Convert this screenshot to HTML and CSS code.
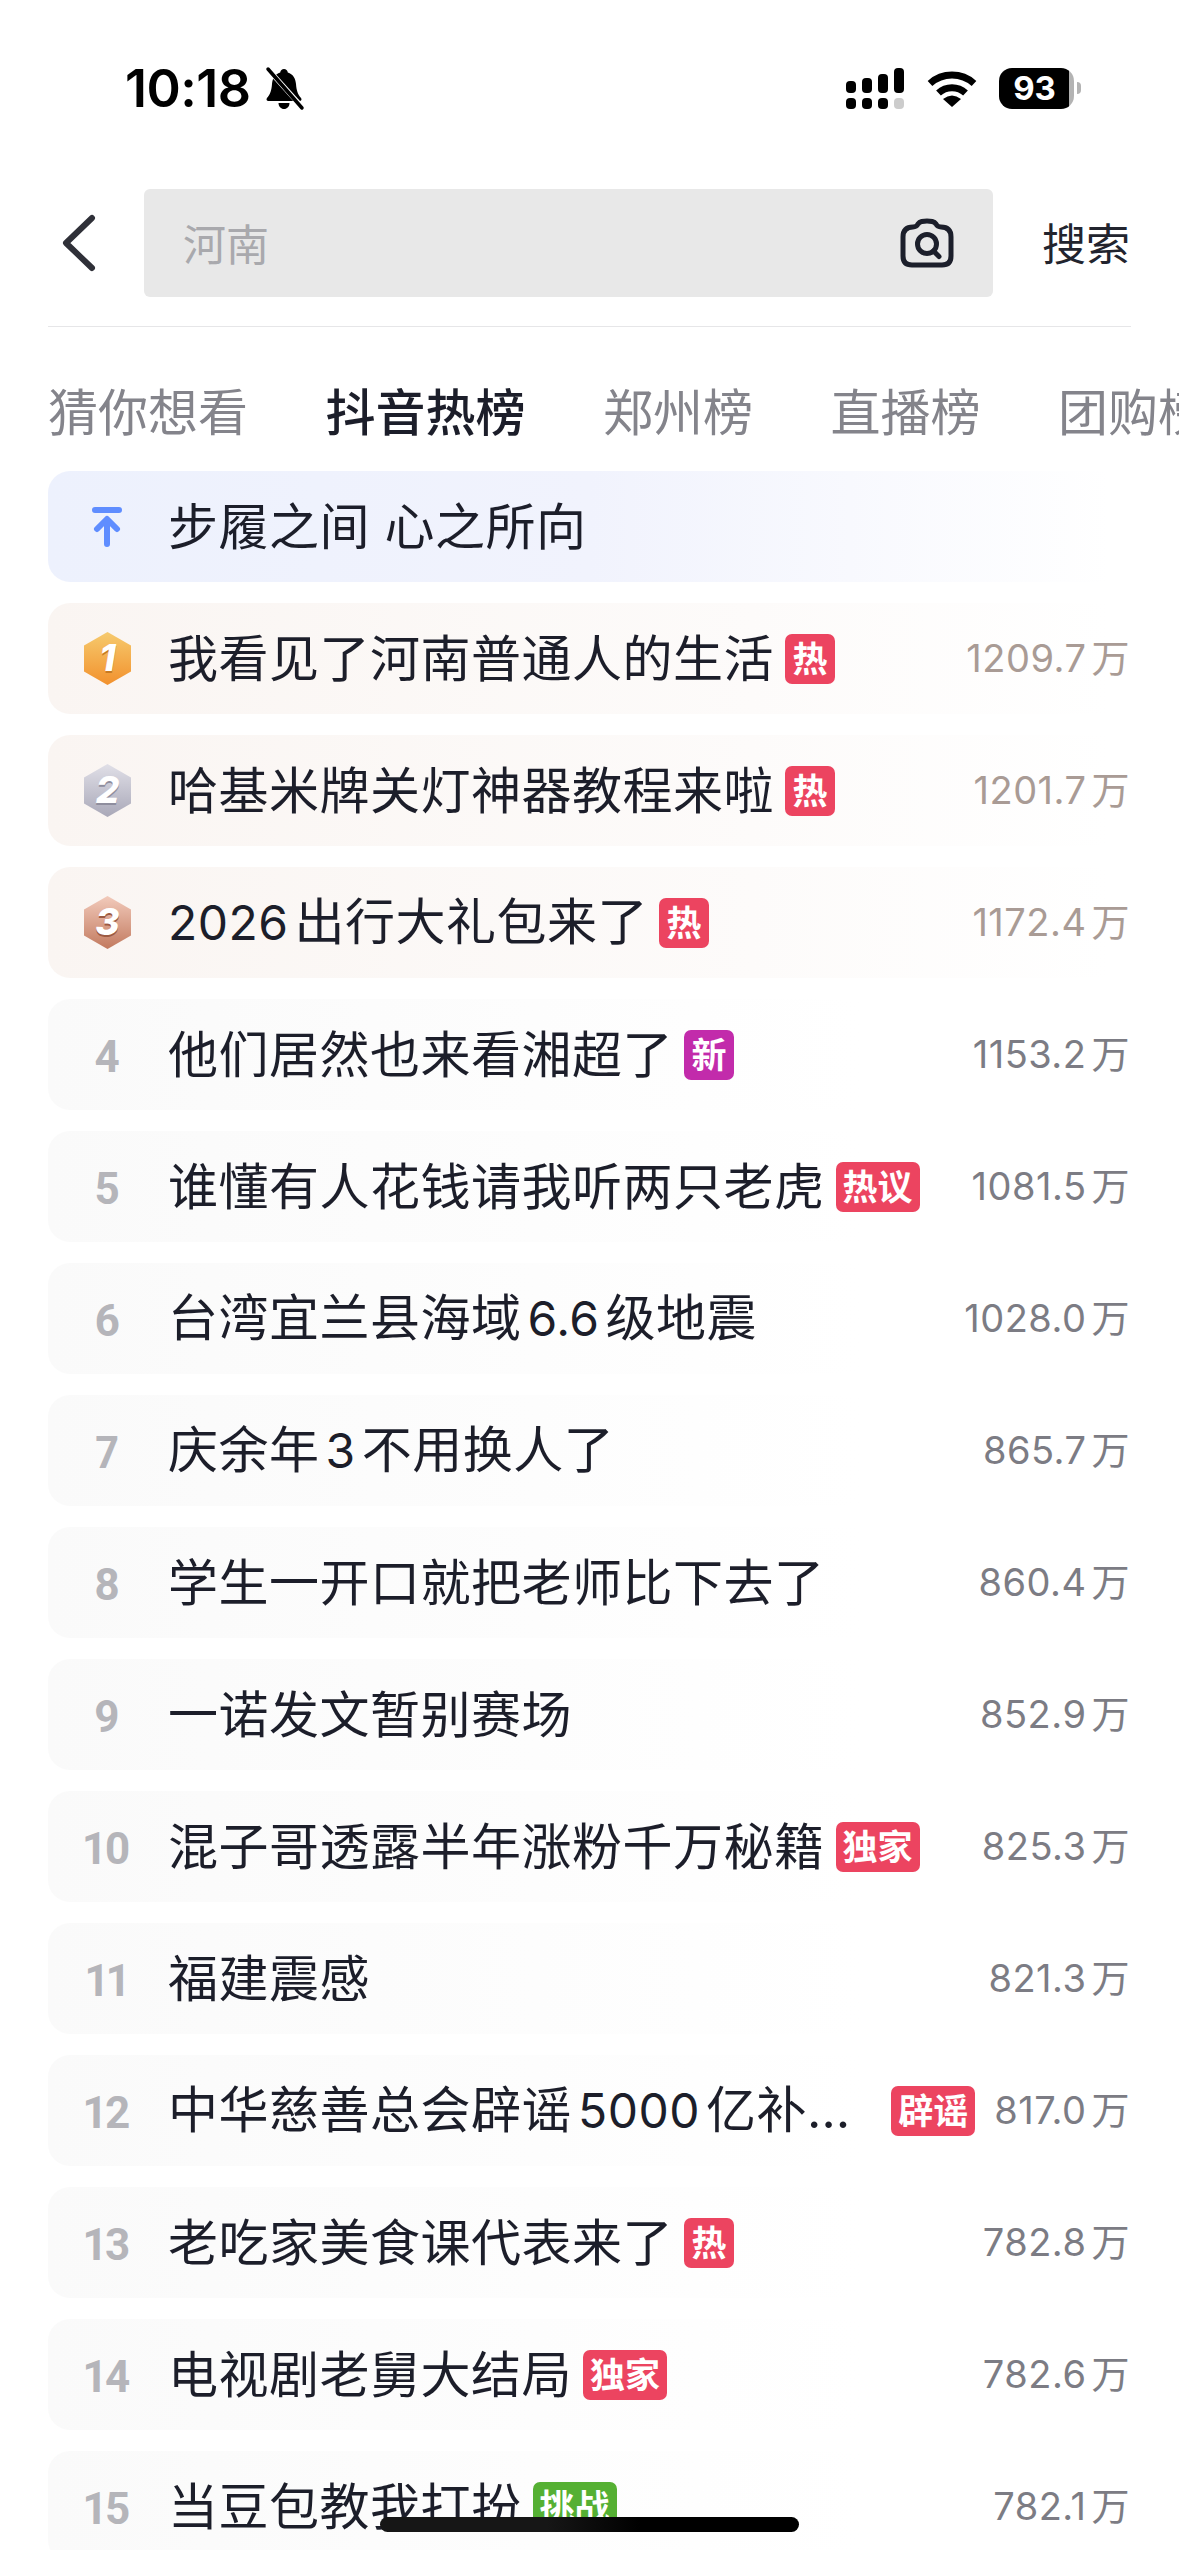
FILE: index.html
```html
<!DOCTYPE html>
<html lang="zh-CN">
<head>
  <meta charset="utf-8">
  <meta name="viewport" content="width=device-width, initial-scale=1">
  <title>抖音热榜</title>
  <link rel="stylesheet" href="styles.css">
</head>
<body>
  <div class="screen">
    <div class="status">
      <div class="status-left">
        <span class="time">10:18</span>
        <svg class="bell" viewBox="0 0 36 41">
          <path d="M18 1c2 0 3.500 1.500 3.800 3.500C27 6 29.500 10.500 30 16c.5 6 1.500 10 5 14 1 1.500.5 3-1.500 3H2.500C.5 33 0 31.500 1 30c3.500-4 4.500-8 5-14 .5-5.500 3-10 8.200-11.500C14.500 2.500 16 1 18 1z"/>
          <path d="M12.500 35h11c0 3.500-2.500 6-5.500 6s-5.500-2.500-5.500-6z"/>
          <path class="bell-gap" d="M0 -1L36 39"/>
          <path class="bell-slash" d="M2 1L36 40"/>
        </svg>
      </div>
      <div class="status-right">
        <svg class="signal" viewBox="0 0 58 41">
          <rect x="0" y="13" width="10" height="12" rx="4"/>
          <rect x="16" y="10" width="10" height="15" rx="4"/>
          <rect x="32" y="6" width="10" height="19" rx="4"/>
          <rect x="48" y="0" width="10" height="25" rx="4"/>
          <rect x="0" y="30" width="10" height="11" rx="4"/>
          <rect x="16" y="30" width="10" height="11" rx="4"/>
          <rect x="32" y="30" width="10" height="11" rx="4"/>
          <rect class="off" x="48" y="30" width="10" height="11" rx="4"/>
        </svg>
        <svg class="wifi" viewBox="0 0 50 37">
          <path d="M3 13.500A33 33 0 0 1 47 13.500"/>
          <path d="M11.500 23A20 20 0 0 1 38.500 23"/>
          <path class="wifi-dot" d="M25 37L16 29Q25 22 34 29Z"/>
        </svg>
        <div class="battery"><span>93</span></div>
        <div class="battery-nub"></div>
      </div>
    </div>

    <div class="search-row">
      <svg class="back" viewBox="0 0 34 58">
        <path d="M30 4L4 29L30 54"/>
      </svg>
      <div class="search-box">
        <span class="placeholder">河南</span>
        <svg class="camera" viewBox="0 0 54 50">
          <path d="M3 19C3 12 7 9 13 9C16 9 17 8 18 6C20 3 23 3 27 3C31 3 34 3 36 6C37 8 38 9 41 9C47 9 51 12 51 19V38C51 44 48 47 42 47H12C6 47 3 44 3 38Z"/>
          <circle cx="27" cy="26" r="9.500"/>
          <path d="M33.500 33L39 38.500"/>
        </svg>
      </div>
      <span class="search-btn">搜索</span>
    </div>

    <div class="tabs">
      <span class="tab">猜你想看</span>
      <span class="tab active">抖音热榜</span>
      <span class="tab">郑州榜</span>
      <span class="tab">直播榜</span>
      <span class="tab">团购榜</span>
    </div>

    <div class="list">
      <div class="row pinned">
        <div class="rank">
          <svg class="pin" viewBox="0 0 30 40">
            <path d="M3 3H27M15 37V13M5 22L15 12L25 22"/>
          </svg>
        </div>
        <span class="title">步履之间 心之所向</span>
      </div>

      <div class="row top">
        <div class="rank">
          <svg class="medal" viewBox="0 0 51 57">
            <defs>
              <linearGradient id="gold" x1="0" y1="0" x2="0" y2="1">
                <stop offset="0" stop-color="#f6ca6e"/>
                <stop offset="1" stop-color="#f2912d"/>
              </linearGradient>
            </defs>
            <path fill="url(#gold)" d="M25.500 2L49 15.500V41.500L25.500 55L2 41.500V15.500Z"/>
            <text class="medal-num" x="25.500" y="41" fill="#c77a22" dy="2">1</text>
            <text class="medal-num" x="25.500" y="41" fill="#fff">1</text>
          </svg>
        </div>
        <span class="title">我看见了河南普通人的生活</span>
        <span class="tag">热</span>
        <span class="count">1209.7<span class="unit">万</span></span>
      </div>

      <div class="row top">
        <div class="rank">
          <svg class="medal" viewBox="0 0 51 57">
            <defs>
              <linearGradient id="silver" x1="0" y1="0" x2="0" y2="1">
                <stop offset="0" stop-color="#e0dfe7"/>
                <stop offset="1" stop-color="#a9a8b8"/>
              </linearGradient>
            </defs>
            <path fill="url(#silver)" d="M25.500 2L49 15.500V41.500L25.500 55L2 41.500V15.500Z"/>
            <text class="medal-num" x="25.500" y="41" fill="#8f8e9e" dy="2">2</text>
            <text class="medal-num" x="25.500" y="41" fill="#fff">2</text>
          </svg>
        </div>
        <span class="title">哈基米牌关灯神器教程来啦</span>
        <span class="tag">热</span>
        <span class="count">1201.7<span class="unit">万</span></span>
      </div>

      <div class="row top">
        <div class="rank">
          <svg class="medal" viewBox="0 0 51 57">
            <defs>
              <linearGradient id="bronze" x1="0" y1="0" x2="0" y2="1">
                <stop offset="0" stop-color="#f2cabb"/>
                <stop offset="1" stop-color="#c27a5f"/>
              </linearGradient>
            </defs>
            <path fill="url(#bronze)" d="M25.500 2L49 15.500V41.500L25.500 55L2 41.500V15.500Z"/>
            <text class="medal-num" x="25.500" y="41" fill="#9c5a42" dy="2">3</text>
            <text class="medal-num" x="25.500" y="41" fill="#fff">3</text>
          </svg>
        </div>
        <span class="title"><span class="num lead">2026</span>出行大礼包来了</span>
        <span class="tag">热</span>
        <span class="count">1172.4<span class="unit">万</span></span>
      </div>

      <div class="row">
        <div class="rank">4</div>
        <span class="title">他们居然也来看湘超了</span>
        <span class="tag tag-new">新</span>
        <span class="count">1153.2<span class="unit">万</span></span>
      </div>

      <div class="row">
        <div class="rank">5</div>
        <span class="title">谁懂有人花钱请我听两只老虎</span>
        <span class="tag">热议</span>
        <span class="count">1081.5<span class="unit">万</span></span>
      </div>

      <div class="row">
        <div class="rank">6</div>
        <span class="title">台湾宜兰县海域<span class="num">6.6</span>级地震</span>
        <span class="count">1028.0<span class="unit">万</span></span>
      </div>

      <div class="row">
        <div class="rank">7</div>
        <span class="title">庆余年<span class="num">3</span>不用换人了</span>
        <span class="count">865.7<span class="unit">万</span></span>
      </div>

      <div class="row">
        <div class="rank">8</div>
        <span class="title">学生一开口就把老师比下去了</span>
        <span class="count">860.4<span class="unit">万</span></span>
      </div>

      <div class="row">
        <div class="rank">9</div>
        <span class="title">一诺发文暂别赛场</span>
        <span class="count">852.9<span class="unit">万</span></span>
      </div>

      <div class="row">
        <div class="rank">10</div>
        <span class="title">混子哥透露半年涨粉千万秘籍</span>
        <span class="tag">独家</span>
        <span class="count">825.3<span class="unit">万</span></span>
      </div>

      <div class="row">
        <div class="rank">11</div>
        <span class="title">福建震感</span>
        <span class="count">821.3<span class="unit">万</span></span>
      </div>

      <div class="row">
        <div class="rank">12</div>
        <span class="title">中华慈善总会辟谣<span class="num">5000</span>亿补贴款</span>
        <span class="tag">辟谣</span>
        <span class="count">817.0<span class="unit">万</span></span>
      </div>

      <div class="row">
        <div class="rank">13</div>
        <span class="title">老吃家美食课代表来了</span>
        <span class="tag">热</span>
        <span class="count">782.8<span class="unit">万</span></span>
      </div>

      <div class="row">
        <div class="rank">14</div>
        <span class="title">电视剧老舅大结局</span>
        <span class="tag">独家</span>
        <span class="count">782.6<span class="unit">万</span></span>
      </div>

      <div class="row">
        <div class="rank">15</div>
        <span class="title">当豆包教我打扮</span>
        <span class="tag tag-challenge">挑战</span>
        <span class="count">782.1<span class="unit">万</span></span>
      </div>
    </div>

    <div class="home-bar"></div>
  </div>
</body>
</html>
```

FILE: styles.css
```css
* {
  box-sizing: border-box;
}

html, body {
  margin: 0;
  padding: 0;
  background: #fff;
}

body {
  font-family: Inter, "Noto Sans CJK SC", sans-serif;
  color: #1c1e2a;
}

.screen {
  position: relative;
  width: 1179px;
  height: 2556px;
  overflow: hidden;
  background: #fff;
}

/* status bar */
.status {
  height: 176px;
  padding: 0 98px 0 125px;
  display: flex;
  align-items: center;
  justify-content: space-between;
}

.status-left {
  display: flex;
  align-items: center;
  gap: 15px;
}

.time {
  font-size: 52px;
  font-weight: 600;
  color: #000;
  letter-spacing: -.5px;
}

.bell {
  width: 36px;
  height: 41px;
  overflow: visible;
}

.bell-gap {
  stroke: #fff;
  stroke-width: 5;
}

.bell-slash {
  stroke: #000;
  stroke-width: 3.500;
  stroke-linecap: round;
}

.status-right {
  display: flex;
  align-items: center;
}

.signal {
  width: 58px;
  height: 41px;
}

.signal .off {
  fill: #ccc;
}

.wifi {
  width: 50px;
  height: 37px;
  margin-left: 23px;
}

.wifi path {
  fill: none;
  stroke: #000;
  stroke-width: 7;
}

.wifi .wifi-dot {
  fill: #000;
  stroke: none;
}

.battery {
  width: 75px;
  height: 41px;
  margin-left: 22px;
  border-radius: 13px;
  background: linear-gradient(to right, #000 94%, #b3b3b3 94%);
  display: flex;
  align-items: center;
  justify-content: center;
  padding-right: 4px;
  color: #fff;
  font-size: 33px;
  font-weight: 700;
}

.battery-nub {
  width: 4px;
  height: 12px;
  margin-left: 3px;
  background: #b3b3b3;
  border-radius: 0 6px 6px 0;
}

/* search */
.search-row {
  margin: 13px 48px 0;
  padding-bottom: 29px;
  border-bottom: 1px solid #e6e6e8;
  display: flex;
  align-items: center;
}

.back {
  width: 34px;
  height: 58px;
  margin-left: 14px;
  margin-right: 48px;
}

.back path {
  fill: none;
  stroke: #2f3038;
  stroke-width: 6;
  stroke-linecap: round;
  stroke-linejoin: round;
}

.search-box {
  width: 849px;
  height: 108px;
  padding: 0 39px 3px 39px;
  background: #e8e8e8;
  border-radius: 6px;
  display: flex;
  align-items: center;
  justify-content: space-between;
}

.placeholder {
  font-size: 43px;
  color: #a9a9ad;
}

.camera {
  width: 54px;
  height: 50px;
  margin-top: 3px;
}

.camera path, .camera circle {
  fill: none;
  stroke: #1c1f2b;
  stroke-width: 5;
  stroke-linecap: round;
}

.search-btn {
  margin-left: auto;
  padding-right: 1px;
  padding-bottom: 3px;
  font-size: 44px;
  color: #22242e;
}

/* tabs */
.tabs {
  height: 144px;
  padding: 20px 0 0 48px;
  display: flex;
  align-items: center;
  gap: 77.5px;
  white-space: nowrap;
}

.tab {
  font-size: 50px;
  color: #84848b;
}

.tab.active {
  color: #1c1e2a;
  font-weight: 500;
}

/* list */
.list {
  padding: 0 48px;
}

.row {
  height: 111px;
  margin-bottom: 21px;
  padding-right: 1px;
  border-radius: 22px;
  display: flex;
  align-items: center;
  background: linear-gradient(to right, #fafafa, #fff 75%);
}

.row.pinned {
  background: linear-gradient(to right, #edf1fd, #f1f3fd 50%, #fff 98%);
}

.row.top {
  background: linear-gradient(to right, #faf5f2, #fdfbfa 65%, #fff 98%);
}

.rank {
  flex: none;
  width: 118px;
  margin-right: 2px;
  padding-top: 5px;
  display: flex;
  align-items: center;
  justify-content: center;
  font-family: Roboto, sans-serif;
  font-size: 44px;
  font-weight: 700;
  font-variant-numeric: proportional-nums;
  color: #b5b5ba;
}

.row.top .rank, .row.pinned .rank {
  padding-top: 0;
}

.pin {
  width: 30px;
  height: 40px;
}

.pin path {
  fill: none;
  stroke: #5f8dff;
  stroke-width: 6;
  stroke-linecap: round;
  stroke-linejoin: round;
}

.medal {
  width: 51px;
  height: 57px;
}

.medal-num {
  font-family: Inter, sans-serif;
  font-size: 37px;
  font-weight: 800;
  font-style: italic;
  text-anchor: middle;
}

.title {
  min-width: 0;
  font-size: 50px;
  letter-spacing: .5px;
  line-height: 70px;
  white-space: nowrap;
  overflow: hidden;
  text-overflow: ellipsis;
}

/* digits inside a headline sit a little apart from the characters */
.num {
  font-size: 48px;
  margin: 0 6px;
}

.num.lead {
  margin-left: 0;
}

.tag {
  flex: none;
  height: 50px;
  min-width: 50px;
  margin-left: 11px;
  padding: 0 7px;
  border-radius: 7px;
  background: #ec4460;
  color: #fff;
  font-size: 35px;
  font-weight: 700;
  line-height: 50px;
  text-align: center;
}

.tag-new {
  background: #c22bab;
}

.tag-challenge {
  background: #55b033;
}

.count {
  flex: none;
  margin-left: auto;
  padding-left: 19px;
  padding-bottom: 6px;
  font-size: 38px;
  letter-spacing: .5px;
  color: #7c7c84;
  white-space: nowrap;
}

.row.top .count {
  color: #a99b95;
}

.unit {
  margin-left: 5px;
}

.home-bar {
  position: absolute;
  left: 380px;
  top: 2517px;
  width: 419px;
  height: 15px;
  border-radius: 8px;
  background: linear-gradient(to right, #161616 40%, #000 62%);
}

.screen::after {
  content: "";
  position: absolute;
  left: 0;
  right: 0;
  bottom: 0;
  height: 6px;
  background: #fff;
}
```
